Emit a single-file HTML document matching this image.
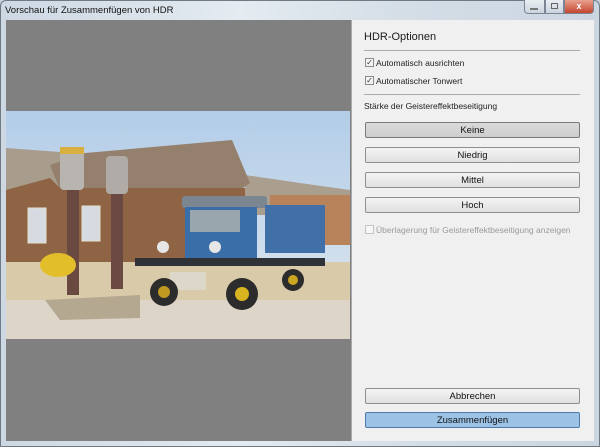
<!DOCTYPE html>
<html><head><meta charset="utf-8"><style>
*{margin:0;padding:0;box-sizing:border-box}
body{width:600px;height:447px;overflow:hidden;background:#c9d4df;font-family:"Liberation Sans",sans-serif;position:relative}
.win{position:absolute;left:0;top:0;width:600px;height:447px;background:linear-gradient(90deg,#cdd8e3,#e4ebf1 40%,#d3dde6 70%,#cbd6e1);border:1px solid #6f7a85;border-radius:6px 6px 0 0}
.title{position:absolute;left:5px;top:5px;font-size:9.5px;color:#111}
.ctl{position:absolute;top:0;height:14px;border:1px solid #7a8694;border-top:none}
.left{position:absolute;left:6px;top:20px;width:345px;height:421px;background:#808080}
.right{position:absolute;left:351px;top:20px;width:243px;height:421px;background:#f0f0f0;border-left:1px solid #aaa}
.t{position:absolute;font-size:9px;color:#222}
.hr{position:absolute;left:364px;width:216px;height:1px;background:#aaa}
.cb{position:absolute;left:365px;width:9px;height:9px;border:1px solid #8a8a8a;background:#f4f4f4;font-size:8px;line-height:7px;text-align:center;color:#333}
.btn{position:absolute;left:365px;width:215px;height:16px;border:1px solid #8e8f8f;border-radius:2px;background:linear-gradient(#f4f4f4,#e0e0e0);font-size:9.5px;text-align:center;line-height:15px;color:#111}
</style></head><body>
<div class="win"></div>
<div class="title">Vorschau für Zusammenfügen von HDR</div>
<div class="ctl" style="left:524px;width:21px;background:linear-gradient(#e9eef3,#cbd4de);border-radius:0 0 0 4px"></div>
<div class="ctl" style="left:545px;width:19px;background:linear-gradient(#e9eef3,#cbd4de)"></div>
<div style="position:absolute;left:551px;top:3px;width:7px;height:6px;border:1px solid #666"></div>
<div class="ctl" style="left:564px;width:30px;background:linear-gradient(#e8a08f,#c4452f);border-radius:0 0 4px 0;color:#fff;font-size:9px;text-align:center;font-weight:bold;line-height:12px">x</div>
<div style="position:absolute;left:530px;top:8px;width:8px;height:2px;background:#777"></div>
<div class="left"></div>
<svg style="position:absolute;left:6px;top:111px" width="344" height="228" viewBox="6 111 344 228">
<defs><linearGradient id="sky" x1="0" y1="0" x2="0" y2="1"><stop offset="0" stop-color="#b3cde8"/><stop offset="1" stop-color="#e0e8ef"/></linearGradient></defs>
<rect x="6" y="111" width="344" height="228" fill="url(#sky)"/>
<path d="M6 148 L60 152 L60 190 L6 190Z" fill="#a89c8c"/>
<path d="M245 175 L300 183 L350 190 L350 215 L245 215Z" fill="#aa9e8e"/>
<rect x="6" y="262" width="344" height="77" fill="#d9caa9"/>
<rect x="6" y="300" width="344" height="39" fill="#dcd5c8"/>
<path d="M50 165 L85 153 L232 140 L250 183 L240 190 L60 190Z" fill="#94806c"/>
<path d="M6 190 L50 178 L60 188 L245 188 L245 262 L6 262Z" fill="#8e6444"/>
<rect x="270" y="195" width="80" height="50" fill="#b8825a"/>
<rect x="28" y="208" width="18" height="35" fill="#d5dbe0" stroke="#e8e0d0"/>
<rect x="82" y="206" width="18" height="35" fill="#d5dbe0" stroke="#e8e0d0"/>
<rect x="60" y="150" width="24" height="40" rx="4" fill="#b8b5b0"/>
<rect x="60" y="147" width="24" height="7" fill="#d8b040"/>
<rect x="67" y="190" width="12" height="105" fill="#6a4a40"/>
<rect x="106" y="156" width="22" height="38" rx="4" fill="#b0aba6"/>
<rect x="111" y="194" width="12" height="95" fill="#6b4a44"/>
<ellipse cx="58" cy="265" rx="18" ry="12" fill="#e2bf2a"/>
<path d="M45 300 L140 295 L140 318 L60 320Z" fill="#b5a890"/>
<rect x="182" y="196" width="85" height="12" rx="3" fill="#7b8690"/>
<rect x="185" y="207" width="72" height="55" fill="#3a6ea8"/>
<rect x="190" y="210" width="50" height="22" fill="#9aa6ad"/>
<rect x="265" y="205" width="60" height="48" fill="#4170a8"/>
<rect x="135" y="258" width="190" height="8" fill="#2f3338"/>
<rect x="170" y="272" width="36" height="18" fill="#ddd7ca"/>
<circle cx="164" cy="292" r="14" fill="#2c2c2c"/><circle cx="164" cy="292" r="6" fill="#c09a20"/>
<circle cx="242" cy="294" r="16" fill="#2c2c2c"/><circle cx="242" cy="294" r="7" fill="#d7b420"/>
<circle cx="293" cy="280" r="11" fill="#2c2c2c"/><circle cx="293" cy="280" r="5" fill="#c9a520"/>
<circle cx="163" cy="247" r="6" fill="#e6e6e6"/><circle cx="215" cy="247" r="6" fill="#e6e6e6"/>
</svg>
<div class="right"></div>
<div class="t" style="left:364px;top:31px;font-size:11px;color:#1a1a1a">HDR-Optionen</div>
<div class="hr" style="top:50px"></div>
<div class="cb" style="top:58px">✓</div><div class="t" style="left:376px;top:58px;font-size:8.5px">Automatisch ausrichten</div>
<div class="cb" style="top:76px">✓</div><div class="t" style="left:376px;top:76px;font-size:8.5px">Automatischer Tonwert</div>
<div class="hr" style="top:94px"></div>
<div class="t" style="left:364px;top:101px;font-size:8.5px">Stärke der Geistereffektbeseitigung</div>
<div class="btn" style="top:122px;background:linear-gradient(#dadada,#cecece);border-color:#7a7a7a">Keine</div>
<div class="btn" style="top:147px">Niedrig</div>
<div class="btn" style="top:172px">Mittel</div>
<div class="btn" style="top:197px">Hoch</div>
<div class="cb" style="top:225px;border-color:#c4c4c4;background:#f7f7f7"></div><div class="t" style="left:376px;top:225px;font-size:8.5px;color:#9a9a9a">Überlagerung für Geistereffektbeseitigung anzeigen</div>
<div class="btn" style="top:388px">Abbrechen</div>
<div class="btn" style="top:412px;background:#9cc2e6;border-color:#4e7ca8">Zusammenfügen</div>
</body></html>
